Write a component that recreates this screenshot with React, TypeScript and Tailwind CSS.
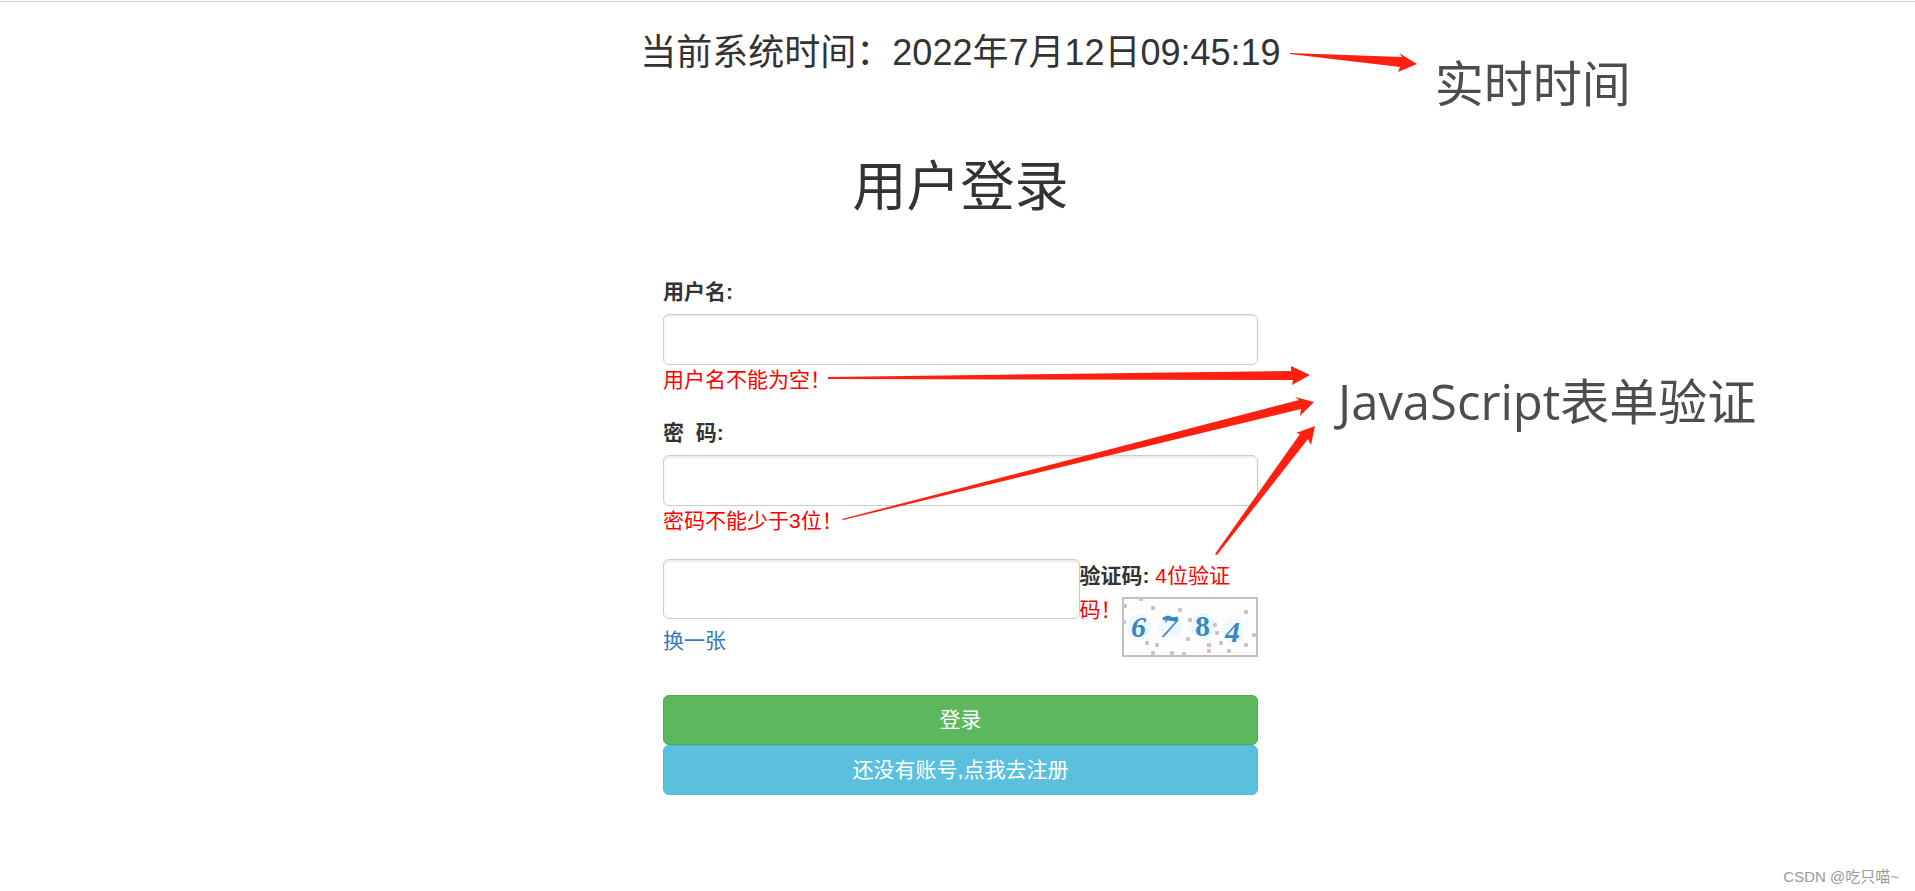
import { useState, type FormEvent } from "react";

const inputClass =
  "block w-full rounded-md border border-[#ccc] bg-white px-4 text-[#555] shadow-[inset_0_2px_2px_rgba(0,0,0,0.075)] outline-none focus:border-[#66afe9]";

const buttonClass =
  "block h-[50px] w-full rounded-md border text-center text-white leading-[30px] cursor-pointer";

const noteClass = "text-[49px] leading-[52px] whitespace-nowrap text-[#4d4d4d]";

const fields = [
  { id: "username", type: "text", label: "用户名:", error: "用户名不能为空！" },
  { id: "password", type: "password", label: "密\u00a0\u00a0码:", error: "密码不能少于3位！" },
];

const arrows = [
  "165,100 628,94 628,89 647,98 629,108 630,103 165,102",
  "179,242 636,123 632,120 651,125 637,139 638,132 180,243",
  "552,277 637,157 633,156 652,149 648,168 645,162 554,278",
];

const specks = [
  [19, 2], [3, 9], [31, 11], [58, 13], [124, 15], [68, 23], [93, 28], [95, 36], [2, 25],
  [66, 42], [132, 38], [25, 46], [35, 48], [99, 46], [124, 48], [107, 54], [31, 56], [50, 56],
  [87, 54], [62, 57],
];

function Captcha() {
  return (
    <svg
      className="float-right mt-1 h-[60px] w-[136px]"
      viewBox="0 0 136 60"
      role="img"
      aria-label="6784"
    >
      <rect x="1" y="1" width="134" height="58" fill="#fefdfc" stroke="#c0c0c0" strokeWidth="2" />
      <g fill="#ebf8fe">
        <ellipse cx="17" cy="30" rx="12" ry="13" />
        <ellipse cx="48" cy="29" rx="12" ry="11" />
        <ellipse cx="81" cy="29" rx="12" ry="13" />
        <ellipse cx="111" cy="34" rx="11" ry="12" />
      </g>
      <g fill="#c6c4c4">
        {specks.map(([x, y]) => (
          <rect key={`${x}-${y}`} x={x - 2} y={y - 2} width="4" height="4" rx="1" />
        ))}
      </g>
      <rect x="85" y="46" width="4" height="4" rx="1" fill="#e3b5b5" />
      <g fill="#3a86bd" fontFamily="'Liberation Serif', serif" fontSize="30" fontWeight="bold">
        <text x="9" y="40" fontStyle="italic">6</text>
        <text x="39" y="41" fontStyle="italic" fontWeight="normal" transform="rotate(8 48 31)">7</text>
        <text x="73" y="39">8</text>
        <text x="103" y="45" fontStyle="italic">4</text>
      </g>
      <path d="M41 22 L46 20 L51 22 L56 21" fill="none" stroke="#3a86bd" strokeWidth="3" />
    </svg>
  );
}

export default function App() {
  const [values, setValues] = useState<Record<string, string>>({});

  const update = (id: string, value: string) => setValues({ ...values, [id]: value });
  const handleSubmit = (e: FormEvent) => e.preventDefault();

  return (
    <div className="bg-white pt-px font-['Liberation_Sans','Noto_Sans_CJK_SC',sans-serif] text-[21px] leading-[30px] text-[#333]">
      <div className="border-t border-[#ccc] pl-1.5">
        <header className="grid grid-cols-[1fr_auto_1fr] pt-[31px]">
          <h3 className="col-start-2 text-4xl leading-10 whitespace-nowrap">
            当前系统时间：2022年7月12日09:45:19
          </h3>
          <div className="flex items-start pt-5">
            <svg className="ml-2 h-5 w-32 shrink-0" viewBox="0 0 128 20" aria-hidden="true">
              <polygon points="1,0 113,4 110,0 128,11 109,19 111,14 1,1" fill="#ff2011" />
            </svg>
            <p className={`${noteClass} pt-1.5 pl-[18px]`}>实时时间</p>
          </div>
        </header>

        <h1 className="mt-[46px] text-center text-[54px] leading-[60px]">用户登录</h1>

        <main className="mt-[60px] grid grid-cols-[1fr_595px_1fr]">
          <form className="relative col-start-2" onSubmit={handleSubmit}>
            {fields.map((field) => (
              <div key={field.id} className="mb-[23px]">
                <label htmlFor={field.id} className="mb-[7px] block font-bold">
                  {field.label}
                </label>
                <input
                  id={field.id}
                  type={field.type}
                  className={`${inputClass} h-[51px]`}
                  value={values[field.id] ?? ""}
                  onChange={(e) => update(field.id, e.target.value)}
                />
                <span className="block text-[#f00]">{field.error}</span>
              </div>
            ))}

            <div className="mb-[38px] flex">
              <div className="w-[70%]">
                <input
                  id="captcha"
                  type="text"
                  className={`${inputClass} h-[60px]`}
                  value={values.captcha ?? ""}
                  onChange={(e) => update("captcha", e.target.value)}
                />
                <a href="#captcha" className="mt-[7px] inline-block text-[#337ab7]">
                  换一张
                </a>
              </div>
              <div className="w-[30%] leading-[34px]">
                <label htmlFor="captcha" className="font-bold">
                  验证码:
                </label>{" "}
                <span className="text-[#f00]">4位验证码！</span>
                <Captcha />
              </div>
            </div>

            <button type="submit" className={`${buttonClass} border-[#4cae4c] bg-[#5cb85c]`}>
              登录
            </button>
            <button type="button" className={`${buttonClass} border-[#46b8da] bg-[#5bc0de]`}>
              还没有账号,点我去注册
            </button>

            <svg
              className="pointer-events-none absolute top-0 left-0 h-[300px] w-[660px] max-w-none"
              viewBox="0 0 660 300"
              aria-hidden="true"
            >
              {arrows.map((points) => (
                <polygon key={points} points={points} fill="#ff2011" />
              ))}
            </svg>
          </form>

          <p
            className={`${noteClass} pt-[98px] pl-20 font-['Open_Sans','Noto_Sans_CJK_SC',sans-serif]`}
          >
            JavaScript表单验证
          </p>
        </main>

        <footer className="mt-[72px] pr-4 pb-1 text-right text-[15px] leading-5 text-[#999]">
          CSDN @吃只喵~
        </footer>
      </div>
    </div>
  );
}
